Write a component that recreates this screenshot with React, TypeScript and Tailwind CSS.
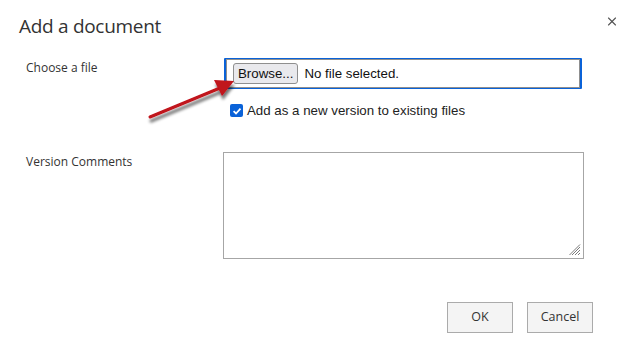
import { X } from "lucide-react";

const Arrow = () => (
  <svg
    className="pointer-events-none absolute left-0 top-0"
    width={632}
    height={362}
    viewBox="0 0 632 362"
    aria-hidden
  >
    <defs>
      <filter id="arrow-shadow" x="-20%" y="-20%" width="140%" height="160%">
        <feGaussianBlur in="SourceAlpha" stdDeviation="1.8" />
        <feOffset dx="1" dy="3.5" result="blur" />
        <feComponentTransfer>
          <feFuncA type="linear" slope="0.55" />
        </feComponentTransfer>
        <feMerge>
          <feMergeNode />
          <feMergeNode in="SourceGraphic" />
        </feMerge>
      </filter>
    </defs>
    <g filter="url(#arrow-shadow)">
      <line x1={150} y1={117} x2={220} y2={88} stroke="#c0121a" strokeWidth={3} strokeLinecap="round" />
      <polygon points="234,81 214,80 222,96" fill="#c0121a" />
    </g>
  </svg>
);

const native = { fontFamily: '"Liberation Sans", Arial, sans-serif' };

export default function App() {
  return (
    <div
      className="relative flex h-[362px] w-[632px] flex-col bg-white text-[#333]"
      style={{ fontFamily: '"Open Sans", "Noto Sans", sans-serif' }}
    >
      <div className="flex items-start justify-between pl-[19px] pr-[13px] pt-[12px]">
        <h1 className="text-[19px] leading-[28px] tracking-[-0.3px] text-[#333]">Add a document</h1>
        <button className="mt-[2px] flex h-[14px] w-[14px] items-center justify-center text-[#555]">
          <X size={15} strokeWidth={1.9} />
        </button>
      </div>

      <div className="mt-[18px] flex">
        <div className="w-[224px] shrink-0 pl-[26px] pt-[1px] text-[12px] leading-[18px]">Choose a file</div>
        <div className="flex flex-col">
          <div className="flex h-[31px] w-[358px] items-center rounded-[1px] border-2 border-[#0a62d8] bg-white">
            <div className="flex h-[29px] w-full items-center border border-[#8f8f8f] pl-[6px]">
              <span
                className="flex h-[21px] items-center rounded-[3px] border border-[#8f8f8f] bg-[#e9e9ed] px-[4px] text-[13.3px] text-[#111]"
                style={native}
              >
                Browse...
              </span>
              <span className="ml-[6px] text-[13.3px] text-[#111]" style={native}>
                No file selected.
              </span>
            </div>
          </div>
          <label
            className="ml-[6px] mt-[12px] flex items-center gap-[4px] text-[13.3px] text-[#222]"
            style={native}
          >
            <span className="flex h-[13px] w-[13px] items-center justify-center rounded-[2px] bg-[#0a62d8]">
              <svg width="10" height="10" viewBox="0 0 10 10">
                <path d="M1.6 5.2 L4 7.5 L8.5 2.6" fill="none" stroke="white" strokeWidth="1.8" />
              </svg>
            </span>
            Add as a new version to existing files
          </label>
        </div>
      </div>

      <div className="mt-[31px] flex">
        <div className="w-[223px] shrink-0 pl-[26px] pt-[1px] text-[12px] leading-[18px]">Version Comments</div>
        <div className="relative h-[107px] w-[361px] border border-[#a6a6a6] bg-white">
          <svg className="absolute bottom-[2px] right-[2px]" width="12" height="12" viewBox="0 0 12 12">
            <path d="M11 3 L3 11 M11 6 L6 11 M11 9 L9 11 M11 0.5 L0.5 11" stroke="#7a7a7a" strokeWidth="1" />
          </svg>
        </div>
      </div>

      <div className="mt-[43px] flex justify-end gap-[14px] pr-[39px]">
        <button className="h-[31px] w-[66px] border border-[#ababab] bg-[#f4f4f4] text-[12.5px] text-[#333]">OK</button>
        <button className="h-[31px] w-[66px] border border-[#ababab] bg-[#f4f4f4] text-[12.5px] text-[#333]">Cancel</button>
      </div>

      <Arrow />
    </div>
  );
}
